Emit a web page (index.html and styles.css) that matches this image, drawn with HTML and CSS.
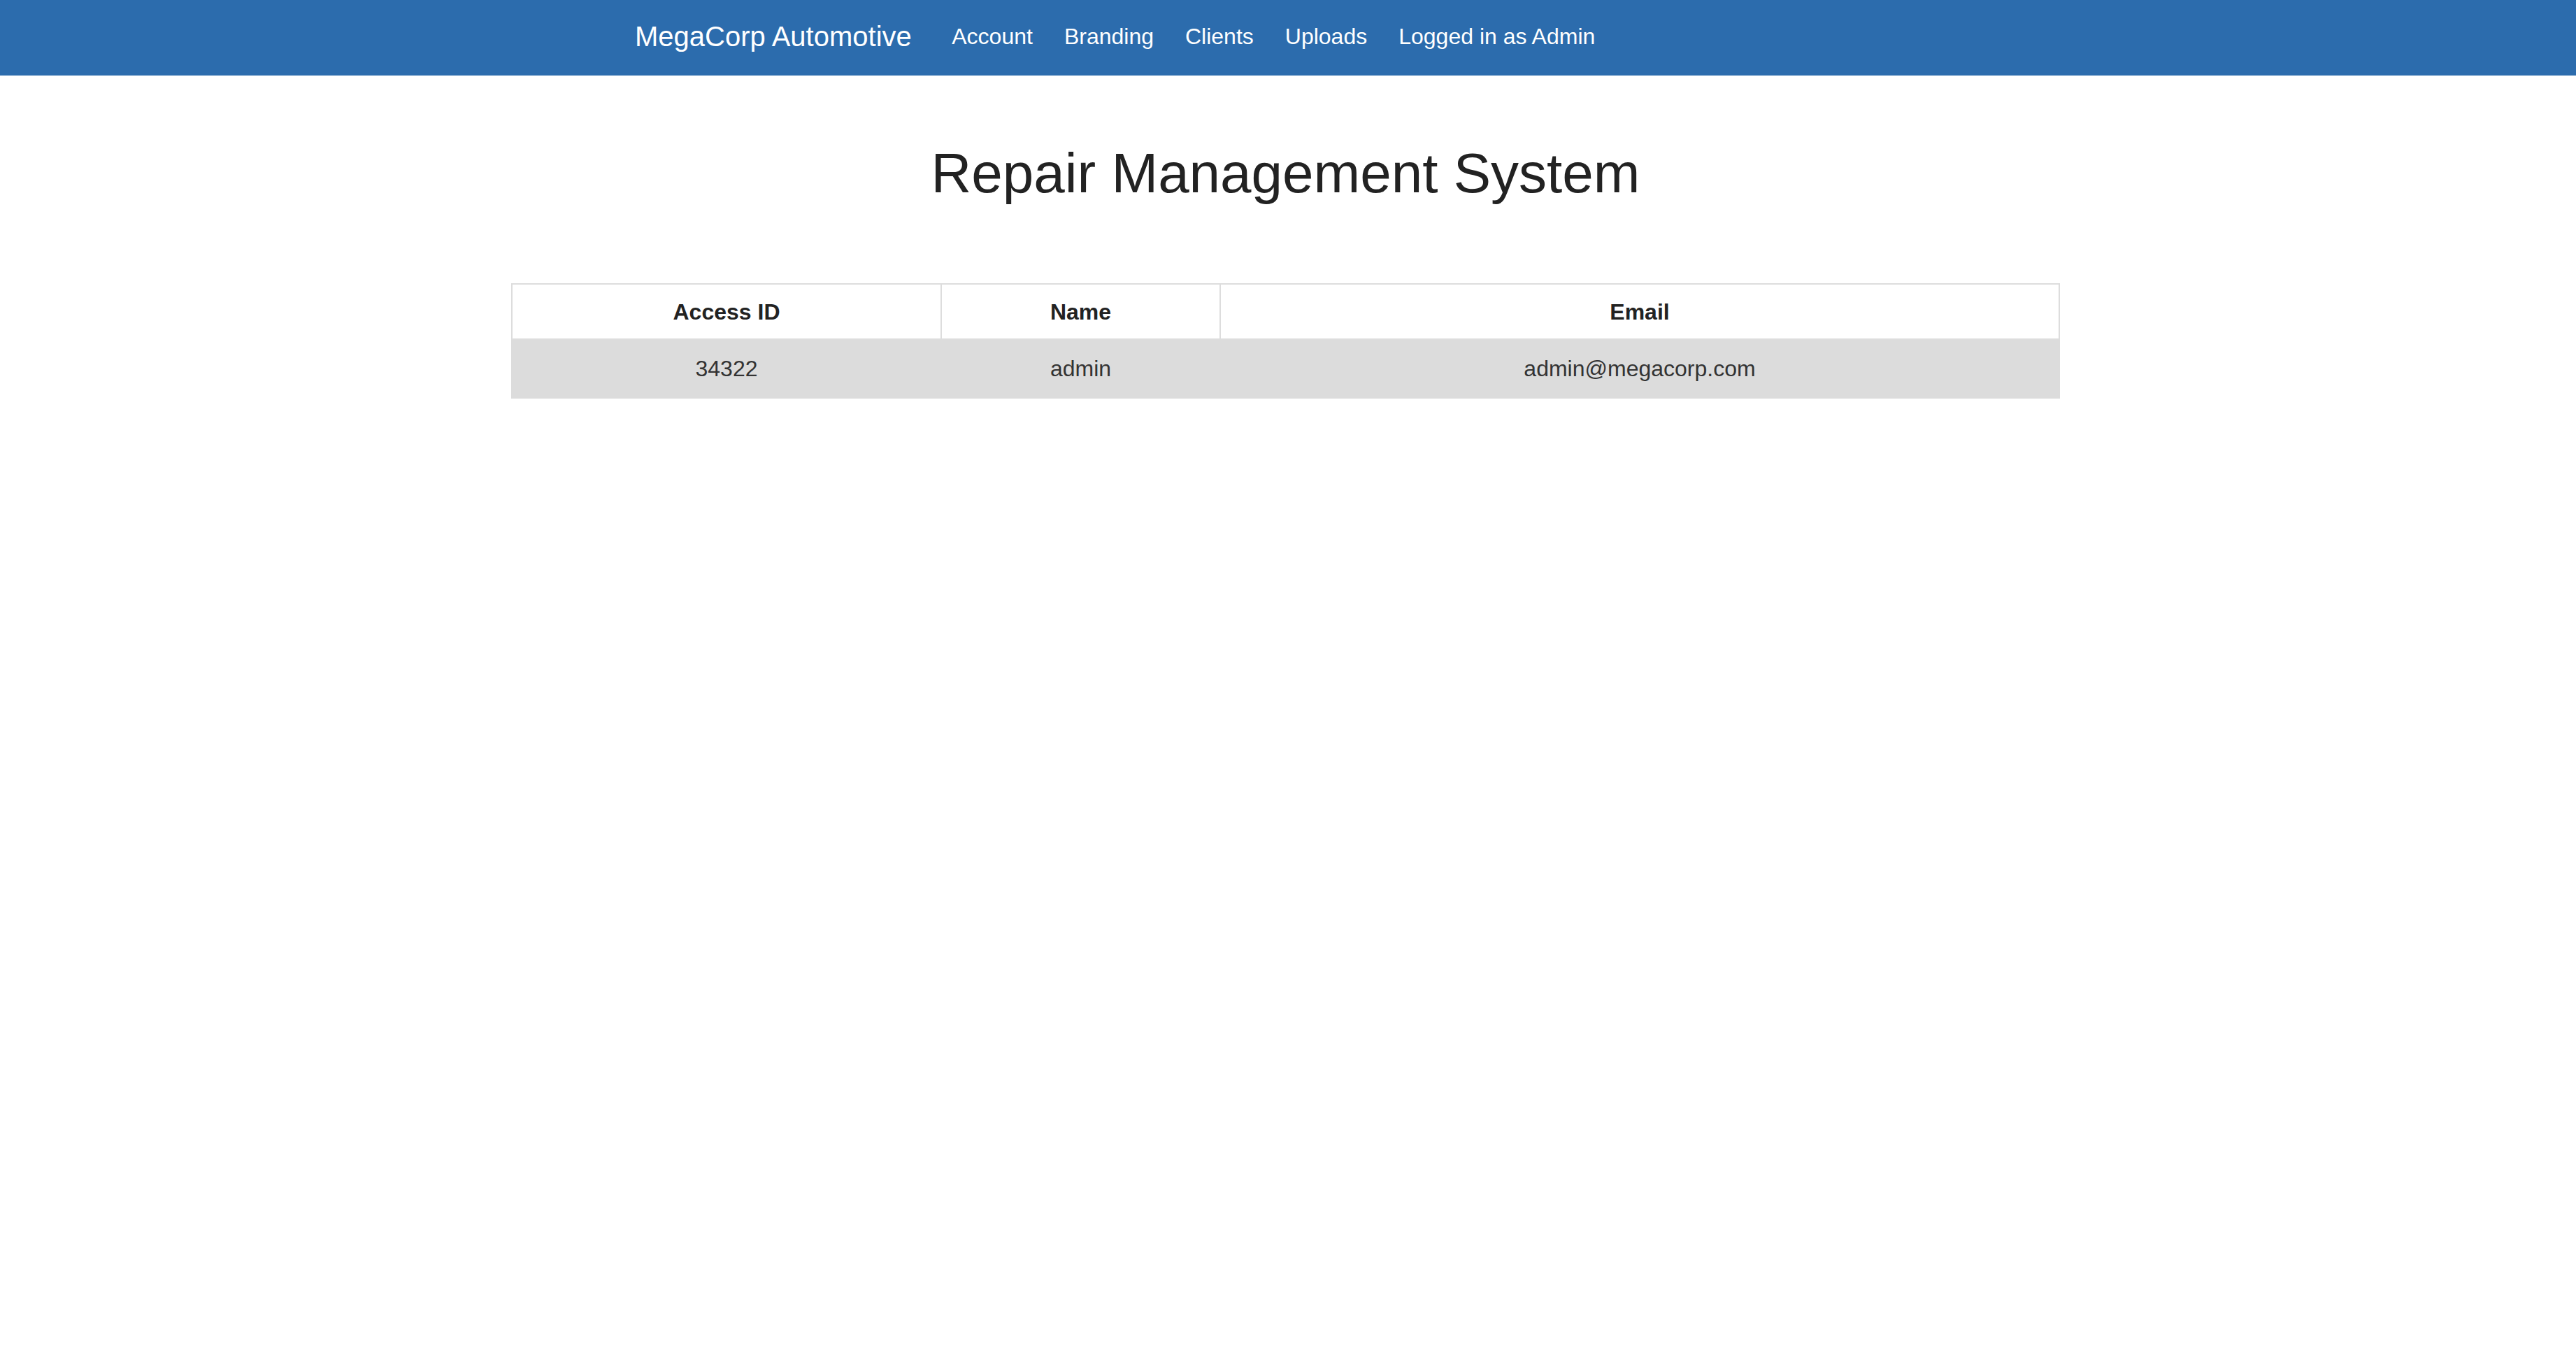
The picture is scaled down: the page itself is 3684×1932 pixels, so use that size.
FILE: index.html
```html
<!DOCTYPE html>
<html lang="en">
<head>
<meta charset="utf-8">
<title>Repair Management System</title>
<link rel="stylesheet" href="styles.css">
</head>
<body>
<nav class="navbar">
  <div class="navbar-inner">
    <a class="brand" href="#">MegaCorp Automotive</a>
    <ul class="nav-links">
      <li><a href="#">Account</a></li>
      <li><a href="#">Branding</a></li>
      <li><a href="#">Clients</a></li>
      <li><a href="#">Uploads</a></li>
      <li><a href="#">Logged in as Admin</a></li>
    </ul>
  </div>
</nav>
<main class="content">
  <h1 class="title">Repair Management System</h1>
  <table class="data-table">
    <thead>
      <tr>
        <th class="col-id">Access ID</th>
        <th class="col-name">Name</th>
        <th class="col-email">Email</th>
      </tr>
    </thead>
    <tbody>
      <tr class="row-alt">
        <td>34322</td>
        <td>admin</td>
        <td>admin@megacorp.com</td>
      </tr>
    </tbody>
  </table>
</main>
</body>
</html>
```
FILE: styles.css
```css
html, body {
  margin: 0;
  padding: 0;
  background: #ffffff;
  font-family: "Liberation Sans", Arial, Helvetica, sans-serif;
  font-size: 32px;
  color: #333333;
}

.navbar {
  background: #2c6cad;
  height: 108px;
}

.navbar-inner {
  height: 104px;
  padding-bottom: 4px;
  padding-left: 908px;
  display: flex;
  align-items: center;
}

.brand {
  color: #ffffff;
  text-decoration: none;
  font-size: 40px;
  padding-right: 35px;
  line-height: 1;
}

.nav-links {
  list-style: none;
  margin: 0;
  padding: 0;
  display: flex;
  align-items: center;
}

.nav-links a {
  display: block;
  color: #ffffff;
  text-decoration: none;
  font-size: 32px;
  padding: 0 22.5px;
  line-height: 1;
}

.content {
  display: flex;
  flex-direction: column;
  align-items: center;
  padding-right: 7px;
}

.title {
  margin: 96px 0 113px;
  font-size: 80px;
  font-weight: normal;
  line-height: 88px;
  color: #222222;
}

.data-table {
  width: 2215px;
  table-layout: fixed;
  border-collapse: collapse;
  border: 2px solid #dddddd;
}

.data-table th,
.data-table td {
  text-align: center;
  line-height: 44px;
  border: 2px solid #dddddd;
  padding-left: 0;
  padding-right: 0;
}

.data-table th {
  font-weight: bold;
  color: #222222;
  padding-top: 17px;
  padding-bottom: 16px;
}

.data-table td {
  color: #333333;
  padding-top: 19px;
  padding-bottom: 19px;
}

.col-id { width: 612px; }
.col-name { width: 397px; }
.col-email { width: auto; }

.row-alt td {
  background: #dcdcdc;
  border-color: #dcdcdc;
}
```
